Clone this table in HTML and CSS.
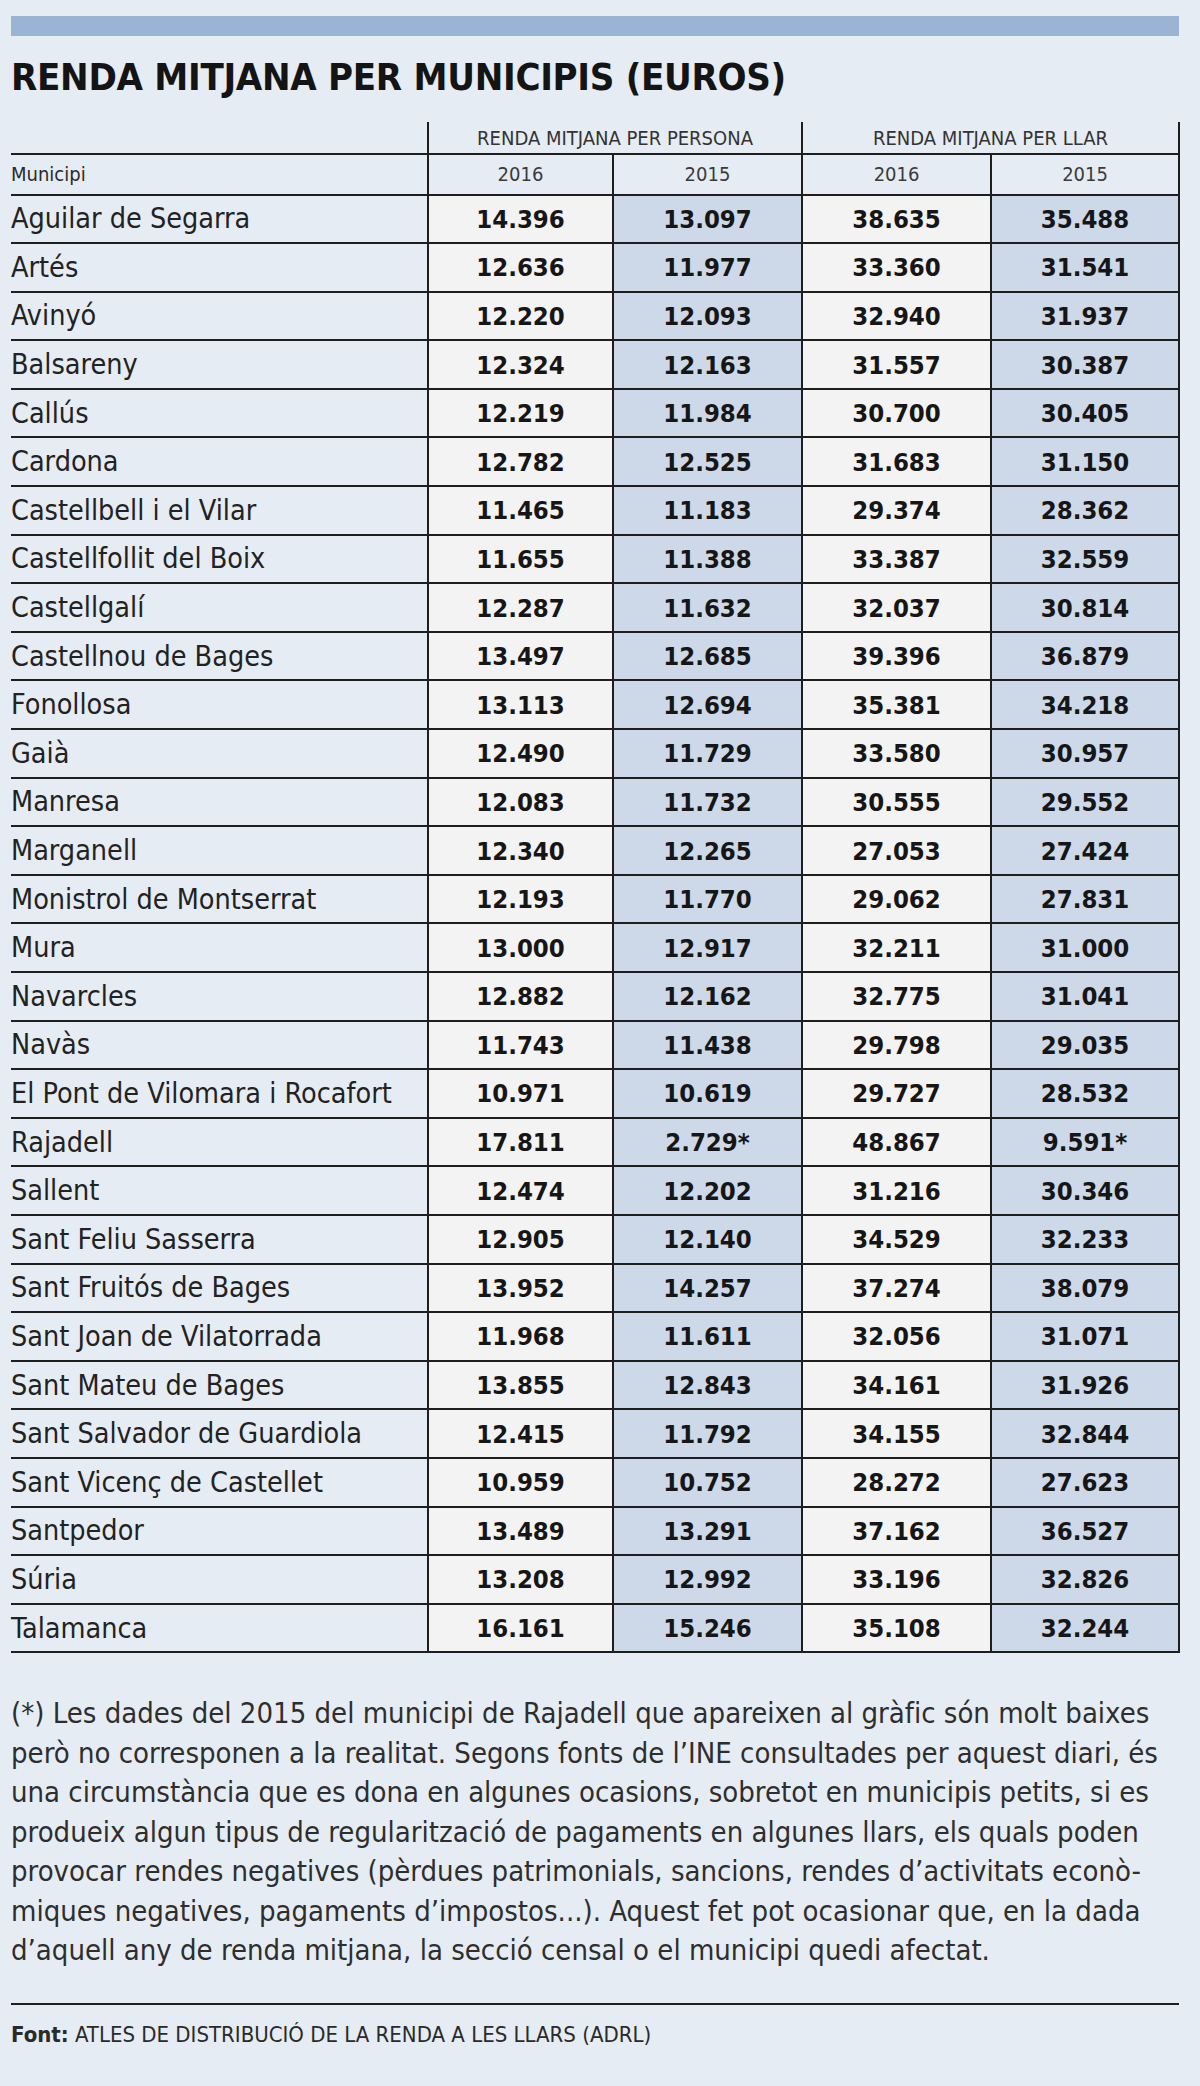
FILE: index.html
```html
<!DOCTYPE html>
<html lang="ca">
<head>
<meta charset="utf-8">
<title>Renda mitjana per municipis</title>
<link rel="stylesheet" href="styles.css">
</head>
<body>
<div class="page">
  <div class="topbar"></div>
  <h1 class="title">RENDA MITJANA PER MUNICIPIS (EUROS)</h1>
  <table class="data">
    <colgroup>
      <col class="c-name"><col class="c-a"><col class="c-b"><col class="c-c"><col class="c-d">
    </colgroup>
    <thead>
      <tr class="grp">
        <th class="blank"></th>
        <th colspan="2" class="gh">RENDA MITJANA PER PERSONA</th>
        <th colspan="2" class="gh last">RENDA MITJANA PER LLAR</th>
      </tr>
      <tr class="yrs">
        <th class="name">Municipi</th>
        <th>2016</th><th>2015</th><th>2016</th><th class="last">2015</th>
      </tr>
    </thead>
    <tbody>
      <tr><td class="name">Aguilar de Segarra</td><td class="y16">14.396</td><td class="y15">13.097</td><td class="y16">38.635</td><td class="y15 last">35.488</td></tr>
      <tr><td class="name">Artés</td><td class="y16">12.636</td><td class="y15">11.977</td><td class="y16">33.360</td><td class="y15 last">31.541</td></tr>
      <tr><td class="name">Avinyó</td><td class="y16">12.220</td><td class="y15">12.093</td><td class="y16">32.940</td><td class="y15 last">31.937</td></tr>
      <tr><td class="name">Balsareny</td><td class="y16">12.324</td><td class="y15">12.163</td><td class="y16">31.557</td><td class="y15 last">30.387</td></tr>
      <tr><td class="name">Callús</td><td class="y16">12.219</td><td class="y15">11.984</td><td class="y16">30.700</td><td class="y15 last">30.405</td></tr>
      <tr><td class="name">Cardona</td><td class="y16">12.782</td><td class="y15">12.525</td><td class="y16">31.683</td><td class="y15 last">31.150</td></tr>
      <tr><td class="name">Castellbell i el Vilar</td><td class="y16">11.465</td><td class="y15">11.183</td><td class="y16">29.374</td><td class="y15 last">28.362</td></tr>
      <tr><td class="name">Castellfollit del Boix</td><td class="y16">11.655</td><td class="y15">11.388</td><td class="y16">33.387</td><td class="y15 last">32.559</td></tr>
      <tr><td class="name">Castellgalí</td><td class="y16">12.287</td><td class="y15">11.632</td><td class="y16">32.037</td><td class="y15 last">30.814</td></tr>
      <tr><td class="name">Castellnou de Bages</td><td class="y16">13.497</td><td class="y15">12.685</td><td class="y16">39.396</td><td class="y15 last">36.879</td></tr>
      <tr><td class="name">Fonollosa</td><td class="y16">13.113</td><td class="y15">12.694</td><td class="y16">35.381</td><td class="y15 last">34.218</td></tr>
      <tr><td class="name">Gaià</td><td class="y16">12.490</td><td class="y15">11.729</td><td class="y16">33.580</td><td class="y15 last">30.957</td></tr>
      <tr><td class="name">Manresa</td><td class="y16">12.083</td><td class="y15">11.732</td><td class="y16">30.555</td><td class="y15 last">29.552</td></tr>
      <tr><td class="name">Marganell</td><td class="y16">12.340</td><td class="y15">12.265</td><td class="y16">27.053</td><td class="y15 last">27.424</td></tr>
      <tr><td class="name">Monistrol de Montserrat</td><td class="y16">12.193</td><td class="y15">11.770</td><td class="y16">29.062</td><td class="y15 last">27.831</td></tr>
      <tr><td class="name">Mura</td><td class="y16">13.000</td><td class="y15">12.917</td><td class="y16">32.211</td><td class="y15 last">31.000</td></tr>
      <tr><td class="name">Navarcles</td><td class="y16">12.882</td><td class="y15">12.162</td><td class="y16">32.775</td><td class="y15 last">31.041</td></tr>
      <tr><td class="name">Navàs</td><td class="y16">11.743</td><td class="y15">11.438</td><td class="y16">29.798</td><td class="y15 last">29.035</td></tr>
      <tr><td class="name">El Pont de Vilomara i Rocafort</td><td class="y16">10.971</td><td class="y15">10.619</td><td class="y16">29.727</td><td class="y15 last">28.532</td></tr>
      <tr><td class="name">Rajadell</td><td class="y16">17.811</td><td class="y15">2.729*</td><td class="y16">48.867</td><td class="y15 last">9.591*</td></tr>
      <tr><td class="name">Sallent</td><td class="y16">12.474</td><td class="y15">12.202</td><td class="y16">31.216</td><td class="y15 last">30.346</td></tr>
      <tr><td class="name">Sant Feliu Sasserra</td><td class="y16">12.905</td><td class="y15">12.140</td><td class="y16">34.529</td><td class="y15 last">32.233</td></tr>
      <tr><td class="name">Sant Fruitós de Bages</td><td class="y16">13.952</td><td class="y15">14.257</td><td class="y16">37.274</td><td class="y15 last">38.079</td></tr>
      <tr><td class="name">Sant Joan de Vilatorrada</td><td class="y16">11.968</td><td class="y15">11.611</td><td class="y16">32.056</td><td class="y15 last">31.071</td></tr>
      <tr><td class="name">Sant Mateu de Bages</td><td class="y16">13.855</td><td class="y15">12.843</td><td class="y16">34.161</td><td class="y15 last">31.926</td></tr>
      <tr><td class="name">Sant Salvador de Guardiola</td><td class="y16">12.415</td><td class="y15">11.792</td><td class="y16">34.155</td><td class="y15 last">32.844</td></tr>
      <tr><td class="name">Sant Vicenç de Castellet</td><td class="y16">10.959</td><td class="y15">10.752</td><td class="y16">28.272</td><td class="y15 last">27.623</td></tr>
      <tr><td class="name">Santpedor</td><td class="y16">13.489</td><td class="y15">13.291</td><td class="y16">37.162</td><td class="y15 last">36.527</td></tr>
      <tr><td class="name">Súria</td><td class="y16">13.208</td><td class="y15">12.992</td><td class="y16">33.196</td><td class="y15 last">32.826</td></tr>
      <tr><td class="name">Talamanca</td><td class="y16">16.161</td><td class="y15">15.246</td><td class="y16">35.108</td><td class="y15 last">32.244</td></tr>
    </tbody>
  </table>
  <p class="note">(*) Les dades del 2015 del municipi de Rajadell que apareixen al gràfic són molt baixes<br>però no corresponen a la realitat. Segons fonts de l’INE consultades per aquest diari, és<br>una circumstància que es dona en algunes ocasions, sobretot en municipis petits, si es<br>produeix algun tipus de regularització de pagaments en algunes llars, els quals poden<br>provocar rendes negatives (pèrdues patrimonials, sancions, rendes d’activitats econò-<br>miques negatives, pagaments d’impostos...). Aquest fet pot ocasionar que, en la dada<br>d’aquell any de renda mitjana, la secció censal o el municipi quedi afectat.</p>
  <div class="rule"></div>
  <p class="source"><b>Font:</b> ATLES DE DISTRIBUCIÓ DE LA RENDA A LES LLARS (ADRL)</p>
</div>
</body>
</html>
```

FILE: styles.css
```css
html, body {
  margin: 0;
  padding: 0;
  background: #e6ecf3;
}

body {
  font-family: "DejaVu Sans Condensed", "DejaVu Sans", "Liberation Sans Narrow", sans-serif;
  font-stretch: condensed;
  color: #1b1b1b;
}

.page {
  width: 1168px;
  padding: 16px 21px 0 11px;
}

.topbar {
  height: 20px;
  background: #9bb4d6;
}

.title {
  margin: 18px 0 0;
  font-size: 38px;
  line-height: 46px;
  font-weight: bold;
  color: #141414;
  letter-spacing: -0.3px;
}

.data {
  margin-top: 22px;
  width: 1168px;
  border-collapse: collapse;
  table-layout: fixed;
}

.c-name { width: 417px; }
.c-a { width: 185px; }
.c-b { width: 189px; }
.c-c { width: 189px; }
.c-d { width: 188px; }

.data th, .data td {
  padding: 0;
  border-bottom: 2px solid #1e1e1e;
}

.data th + th, .data td + td {
  border-left: 2px solid #1e1e1e;
}

.data .last {
  border-right: 2px solid #1e1e1e;
}

.grp th {
  height: 31px;
  font-size: 20px;
  font-weight: normal;
  color: #333;
  text-align: center;
  vertical-align: middle;
}

.yrs th {
  height: 38.5px;
  font-size: 20px;
  font-weight: normal;
  color: #3a3a3a;
  text-align: center;
}

.yrs th.name {
  text-align: left;
  font-size: 20px;
  color: #2a2a2a;
}

.data tbody td {
  height: 46.6px;
  font-size: 25.5px;
  font-weight: bold;
  text-align: center;
  color: #161616;
}

.data tbody td.name {
  font-weight: normal;
  text-align: left;
  font-size: 28.5px;
  color: #222;
}

.data td.y16 { background: #f3f3f4; }
.data td.y15 { background: #cdd9e8; }

.note {
  margin: 41px 0 0;
  font-size: 29px;
  line-height: 39.5px;
  color: #2e2e2e;
  white-space: nowrap;
}

.rule {
  margin-top: 32px;
  height: 2px;
  background: #1e1e1e;
}

.source {
  margin: 17px 0 0;
  font-size: 22px;
  line-height: 26px;
  color: #2a2a2a;
}

.source b {
  font-weight: bold;
}
```
